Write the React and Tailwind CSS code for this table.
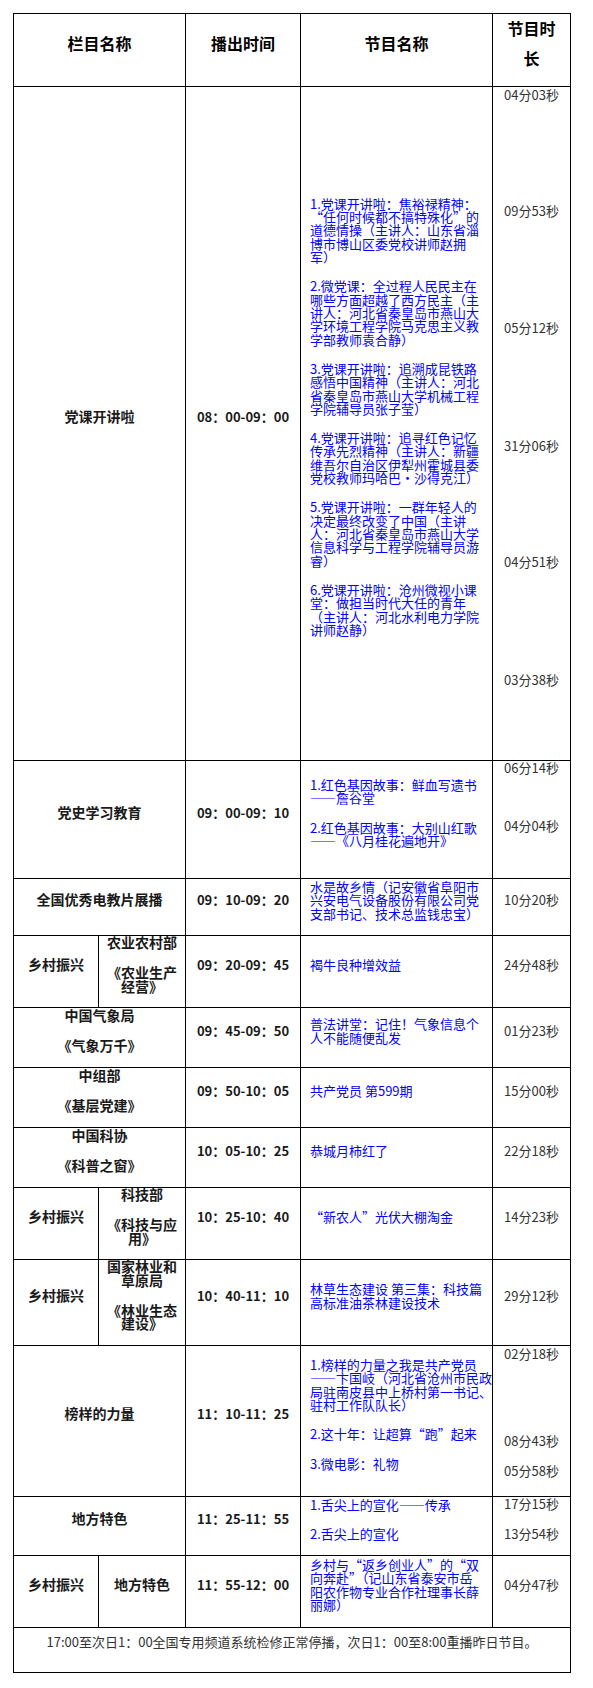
import React from "react";

const td = "border border-black p-0";
const nameCell = `${td} align-middle pb-[14px] text-center font-bold text-[14px] leading-[13.33px] text-[#1a1a1a]`;
const timeCell = `${td} align-middle pb-[14px] text-center font-bold text-[13px] leading-[13.33px] text-[#1a1a1a] whitespace-nowrap`;
const progCell = `${td} align-middle pb-[14px] pl-[9px] text-left text-[13px] leading-[13.33px] text-[#0000ff]`;
const durCell = `${td} text-center text-[13px] leading-[13.33px] text-[#333333] whitespace-nowrap`;

function Lines({ lines }) {
  return (
    <div>
      {lines.map((l, i) => (
        <div key={i} className="whitespace-nowrap">
          {l}
        </div>
      ))}
    </div>
  );
}

function Prog({ paras }) {
  return (
    <div className="flex flex-col gap-[16px]">
      {paras.map((p, i) => (
        <Lines key={i} lines={p} />
      ))}
    </div>
  );
}

function Name({ paras }) {
  return (
    <div className="flex flex-col gap-[17px] items-center">
      {paras.map((p, i) => (
        <Lines key={i} lines={p} />
      ))}
    </div>
  );
}

export default function App() {
  return (
    <div
      lang="zh-CN"
      className="bg-white w-[593px] min-h-[1688px] pt-[13px] pl-[13px] font-['Noto_Sans_CJK_SC','Noto_Sans_CJK_JP',sans-serif]"
    >
      <table className="border-collapse table-fixed w-[558px]">
        <colgroup>
          <col className="w-[85px]" />
          <col className="w-[87px]" />
          <col className="w-[115px]" />
          <col className="w-[192px]" />
          <col className="w-[78px]" />
        </colgroup>
        <tbody>
          <tr className="h-[73px]">
            <td colSpan={2} className={`${td} align-middle pb-[14px] text-center font-bold text-[16px] leading-[16px] text-black`}>
              栏目名称
            </td>
            <td className={`${td} align-middle pb-[14px] text-center font-bold text-[16px] leading-[16px] text-black`}>
              播出时间
            </td>
            <td className={`${td} align-middle pb-[14px] text-center font-bold text-[16px] leading-[16px] text-black`}>
              节目名称
            </td>
            <td className={`${td} align-middle pb-[14px] text-center font-bold text-[16px] leading-[16px] text-black`}>
              <div className="flex flex-col items-center gap-[14px]">
                <div>节目时</div>
                <div>长</div>
              </div>
            </td>
          </tr>

          <tr className="h-[674px]">
            <td colSpan={2} className={nameCell}>党课开讲啦</td>
            <td className={timeCell}>08：00-09：00</td>
            <td className={progCell}>
              <Prog
                paras={[
                  ["1.党课开讲啦：焦裕禄精神：", "“任何时候都不搞特殊化”的", "道德情操（主讲人：山东省淄", "博市博山区委党校讲师赵拥", "军）"],
                  ["2.微党课：全过程人民民主在", "哪些方面超越了西方民主（主", "讲人：河北省秦皇岛市燕山大", "学环境工程学院马克思主义教", "学部教师袁合静）"],
                  ["3.党课开讲啦：追溯成昆铁路", "感悟中国精神（主讲人：河北", "省秦皇岛市燕山大学机械工程", "学院辅导员张子莹）"],
                  ["4.党课开讲啦：追寻红色记忆", "传承先烈精神（主讲人：新疆", "维吾尔自治区伊犁州霍城县委", "党校教师玛哈巴·沙得克江）"],
                  ["5.党课开讲啦：一群年轻人的", "决定最终改变了中国（主讲", "人：河北省秦皇岛市燕山大学", "信息科学与工程学院辅导员游", "睿）"],
                  ["6.党课开讲啦：沧州微视小课", "堂：做担当时代大任的青年", "（主讲人：河北水利电力学院", "讲师赵静）"],
                ]}
              />
            </td>
            <td className={`${durCell} align-top pt-[1px]`}>
              <div>04分03秒</div>
              <div className="mt-[103px]">09分53秒</div>
              <div className="mt-[103px]">05分12秒</div>
              <div className="mt-[105px]">31分06秒</div>
              <div className="mt-[103px]">04分51秒</div>
              <div className="mt-[104px]">03分38秒</div>
            </td>
          </tr>

          <tr className="h-[118px]">
            <td colSpan={2} className={nameCell}>党史学习教育</td>
            <td className={timeCell}>09：00-09：10</td>
            <td className={progCell}>
              <Prog
                paras={[
                  ["1.红色基因故事：鲜血写遗书", "——詹谷堂"],
                  ["2.红色基因故事：大别山红歌", "——《八月桂花遍地开》"],
                ]}
              />
            </td>
            <td className={`${durCell} align-top pt-0`}>
              <div>06分14秒</div>
              <div className="mt-[45px]">04分04秒</div>
            </td>
          </tr>

          <tr className="h-[57px]">
            <td colSpan={2} className={nameCell}>全国优秀电教片展播</td>
            <td className={timeCell}>09：10-09：20</td>
            <td className={progCell}>
              <Prog paras={[["水是故乡情（记安徽省阜阳市", "兴安电气设备股份有限公司党", "支部书记、技术总监钱忠宝）"]]} />
            </td>
            <td className={`${durCell} align-middle pb-[14px]`}>10分20秒</td>
          </tr>

          <tr className="h-[72px]">
            <td className={nameCell}>乡村振兴</td>
            <td className={nameCell}>
              <Name paras={[["农业农村部"], ["《农业生产", "经营》"]]} />
            </td>
            <td className={timeCell}>09：20-09：45</td>
            <td className={progCell}>褐牛良种增效益</td>
            <td className={`${durCell} align-middle pb-[14px]`}>24分48秒</td>
          </tr>

          <tr className="h-[60px]">
            <td colSpan={2} className={nameCell}>
              <Name paras={[["中国气象局"], ["《气象万千》"]]} />
            </td>
            <td className={timeCell}>09：45-09：50</td>
            <td className={progCell}>
              <Prog paras={[["普法讲堂：记住！气象信息个", "人不能随便乱发"]]} />
            </td>
            <td className={`${durCell} align-middle pb-[14px]`}>01分23秒</td>
          </tr>

          <tr className="h-[60px]">
            <td colSpan={2} className={nameCell}>
              <Name paras={[["中组部"], ["《基层党建》"]]} />
            </td>
            <td className={timeCell}>09：50-10：05</td>
            <td className={progCell}>共产党员 第599期</td>
            <td className={`${durCell} align-middle pb-[14px]`}>15分00秒</td>
          </tr>

          <tr className="h-[60px]">
            <td colSpan={2} className={nameCell}>
              <Name paras={[["中国科协"], ["《科普之窗》"]]} />
            </td>
            <td className={timeCell}>10：05-10：25</td>
            <td className={progCell}>恭城月柿红了</td>
            <td className={`${durCell} align-middle pb-[14px]`}>22分18秒</td>
          </tr>

          <tr className="h-[72px]">
            <td className={nameCell}>乡村振兴</td>
            <td className={nameCell}>
              <Name paras={[["科技部"], ["《科技与应", "用》"]]} />
            </td>
            <td className={timeCell}>10：25-10：40</td>
            <td className={progCell}>“新农人”光伏大棚淘金</td>
            <td className={`${durCell} align-middle pb-[14px]`}>14分23秒</td>
          </tr>

          <tr className="h-[86px]">
            <td className={nameCell}>乡村振兴</td>
            <td className={nameCell}>
              <Name paras={[["国家林业和", "草原局"], ["《林业生态", "建设》"]]} />
            </td>
            <td className={timeCell}>10：40-11：10</td>
            <td className={progCell}>
              <Prog paras={[["林草生态建设 第三集：科技篇", "高标准油茶林建设技术"]]} />
            </td>
            <td className={`${durCell} align-middle pb-[14px]`}>29分12秒</td>
          </tr>

          <tr className="h-[151px]">
            <td colSpan={2} className={nameCell}>榜样的力量</td>
            <td className={timeCell}>11：10-11：25</td>
            <td className={progCell}>
              <Prog
                paras={[
                  ["1.榜样的力量之我是共产党员", "——卞国岐（河北省沧州市民政", "局驻南皮县中上桥村第一书记、", "驻村工作队队长）"],
                  ["2.这十年：让超算“跑”起来"],
                  ["3.微电影：礼物"],
                ]}
              />
            </td>
            <td className={`${durCell} align-top pt-[1px]`}>
              <div>02分18秒</div>
              <div className="mt-[74px]">08分43秒</div>
              <div className="mt-[16px]">05分58秒</div>
            </td>
          </tr>

          <tr className="h-[59px]">
            <td colSpan={2} className={nameCell}>地方特色</td>
            <td className={timeCell}>11：25-11：55</td>
            <td className={progCell}>
              <Prog paras={[["1.舌尖上的宣化——传承"], ["2.舌尖上的宣化"]]} />
            </td>
            <td className={`${durCell} align-top pt-0`}>
              <div>17分15秒</div>
              <div className="mt-[17px]">13分54秒</div>
            </td>
          </tr>

          <tr className="h-[72px]">
            <td className={nameCell}>乡村振兴</td>
            <td className={nameCell}>地方特色</td>
            <td className={timeCell}>11：55-12：00</td>
            <td className={progCell}>
              <Prog paras={[["乡村与“返乡创业人”的“双", "向奔赴”（记山东省泰安市岳", "阳农作物专业合作社理事长薛", "丽娜）"]]} />
            </td>
            <td className={`${durCell} align-middle pb-[14px]`}>04分47秒</td>
          </tr>

          <tr className="h-[45px]">
            <td colSpan={5} className={`${td} align-top pt-[7px] text-center text-[13px] leading-[13.33px] text-[#333333] whitespace-nowrap`}>
              17:00至次日1：00全国专用频道系统检修正常停播，次日1：00至8:00重播昨日节目。
            </td>
          </tr>
        </tbody>
      </table>
    </div>
  );
}
